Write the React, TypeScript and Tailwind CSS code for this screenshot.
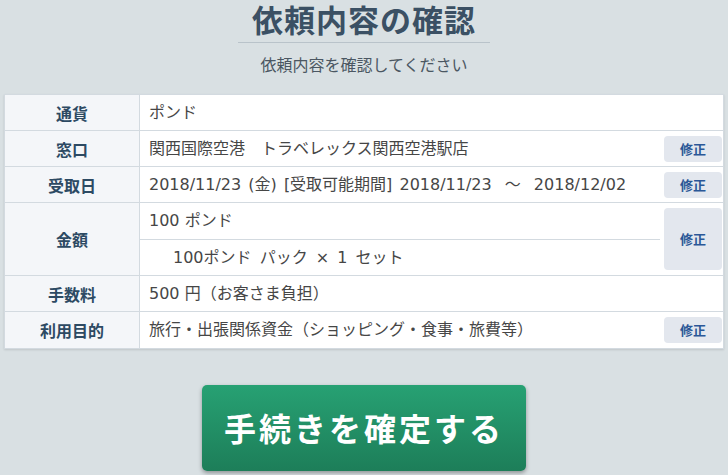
import React from 'react';

const font = { fontFamily: '"DejaVu Sans", "Noto Sans CJK JP", sans-serif' };
const jp = { fontFamily: '"Noto Sans CJK JP", sans-serif' };

function EditButton({ tall = false }: { tall?: boolean }) {
    return (
        <button
            style={jp}
            className={`w-[58px] ${tall ? 'h-[62px]' : 'h-[26px]'} rounded-[4px] bg-[#e3e7ee] text-[#2b5797] text-[13px] font-bold flex items-center justify-center`}
        >
            修正
        </button>
    );
}

function Row({ label, children, edit, last = false }: { label: string; children: React.ReactNode; edit?: boolean; last?: boolean }) {
    return (
        <div className={`flex h-[36px] ${last ? '' : 'border-b border-[#d3dae0]'}`}>
            <div style={jp} className="w-[135px] shrink-0 bg-[#f4f6f9] border-r border-[#d3dae0] flex items-center justify-center text-[16px] font-bold text-[#2d4a63]">
                {label}
            </div>
            <div className="flex-1 flex items-center pl-[9px] text-[16px] text-[#464646] whitespace-pre">{children}</div>
            <div className="w-[63px] shrink-0 flex items-center justify-end pr-[1px]">{edit && <EditButton />}</div>
        </div>
    );
}

export default function App() {
    return (
        <div className="w-[728px] h-[475px] overflow-hidden bg-[#d9e0e3]" style={font}>
            {/* Heading */}
            <div className="flex flex-col items-center pt-[1px]" style={jp}>
                <h1 className="text-[31px] leading-[36px] font-bold text-[#3b5064] tracking-[1px]">依頼内容の確認</h1>
                <div className="w-[252px] h-px bg-[#b9c3ca] mt-[5px]"></div>
                <p className="mt-[10px] text-[16px] leading-[22px] text-[#4b5762]">依頼内容を確認してください</p>
            </div>

            {/* Summary table */}
            <div className="mx-[4px] mt-[19px] bg-white border border-[#d3dae0] shadow-[0_1px_2px_rgba(0,0,0,0.12)]">
                <Row label="通貨">ポンド</Row>
                <Row label="窓口" edit>関西国際空港　トラベレックス関西空港駅店</Row>
                <Row label="受取日" edit>
                    <span className="[word-spacing:2px]">
                        2018/11/23 (金) [受取可能期間] 2018/11/23 <span className="mx-[6px]">～</span> 2018/12/02
                    </span>
                </Row>

                <div className="flex h-[73px] border-b border-[#d3dae0]">
                    <div style={jp} className="w-[135px] shrink-0 bg-[#f4f6f9] border-r border-[#d3dae0] flex items-center justify-center text-[16px] font-bold text-[#2d4a63]">
                        金額
                    </div>
                    <div className="flex-1 flex flex-col text-[16px] text-[#464646] whitespace-pre">
                        <div className="h-[37px] flex items-center pl-[9px] border-b border-[#d3dae0]">100 ポンド</div>
                        <div className="flex-1 flex items-center pl-[33px] [word-spacing:3px]">100ポンド パック × 1 セット</div>
                    </div>
                    <div className="w-[63px] shrink-0 flex items-center justify-end pr-[1px]">
                        <EditButton tall />
                    </div>
                </div>

                <Row label="手数料">500 円（お客さま負担）</Row>
                <Row label="利用目的" edit last>旅行・出張関係資金（ショッピング・食事・旅費等）</Row>
            </div>

            {/* Confirm */}
            <div className="flex justify-center mt-[36px]">
                <button
                    style={jp}
                    className="w-[324px] h-[86px] rounded-[5px] bg-gradient-to-b from-[#27a173] to-[#1d7e59] shadow-[0_2px_4px_rgba(0,0,0,0.35)] text-white text-[32px] font-bold tracking-[3px] flex items-center justify-center pb-[3px]"
                >
                    手続きを確定する
                </button>
            </div>
        </div>
    );
}
